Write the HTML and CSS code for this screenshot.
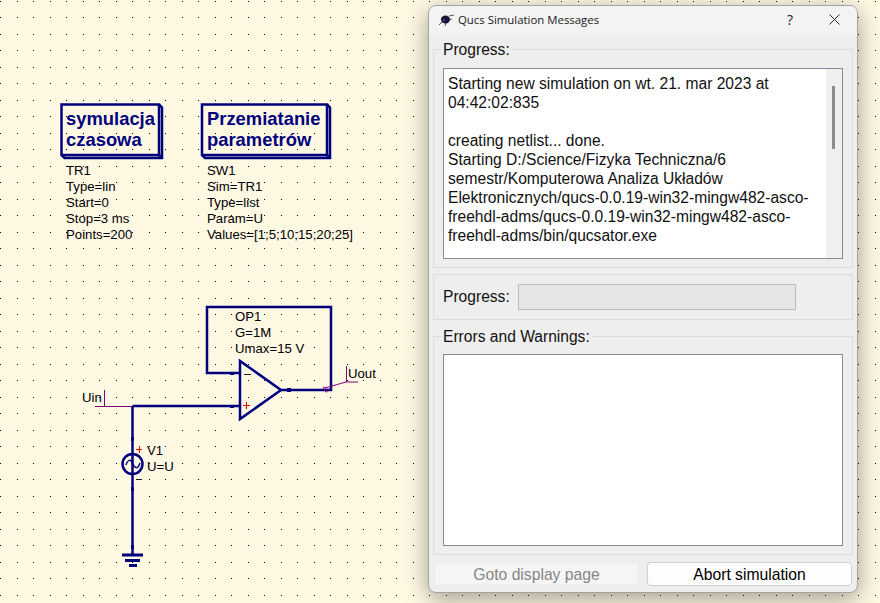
FILE: index.html
```html
<!DOCTYPE html>
<html lang="en">
<head>
    <meta charset="UTF-8">
    <title>Qucs Simulation Messages</title>
    <link rel="stylesheet" href="styles.css">
</head>
<body>

<div class="desktop">
    <!-- Schematic canvas -->
    <svg class="schematic" width="880" height="603" viewBox="0 0 880 603">
        <defs>
            <pattern id="grid" width="33" height="33" patternUnits="userSpaceOnUse">
                <rect x="0" y="1" width="1" height="1"/>
                <rect x="17" y="1" width="1" height="1"/>
                <rect x="0" y="17" width="1" height="1"/>
                <rect x="17" y="17" width="1" height="1"/>
            </pattern>
        </defs>
        <rect width="880" height="603" fill="url(#grid)"/>

        <!-- simulation boxes -->
        <path class="box" d="M61.500 104.500H159V155H61.500Z M159 104.500L162 107.500V158H64.500L61.500 155 M159 155L162 158"/>
        <text class="box-title" x="66" y="125">symulacja</text>
        <text class="box-title" x="66" y="146">czasowa</text>
        <text class="prop" x="66" y="175">TR1</text>
        <text class="prop" x="66" y="191">Type=lin</text>
        <text class="prop" x="66" y="207">Start=0</text>
        <text class="prop" x="66" y="223">Stop=3 ms</text>
        <text class="prop" x="66" y="239">Points=200</text>

        <path class="box" d="M202 104.500H327V155H202Z M327 104.500L330 107.500V158H205L202 155 M327 155L330 158"/>
        <text class="box-title" x="207" y="125">Przemiatanie</text>
        <text class="box-title" x="207" y="146">parametrów</text>
        <text class="prop" x="207" y="175">SW1</text>
        <text class="prop" x="207" y="191">Sim=TR1</text>
        <text class="prop" x="207" y="207">Type=list</text>
        <text class="prop" x="207" y="223">Param=U</text>
        <text class="prop" x="207" y="239">Values=[1;5;10;15;20;25]</text>

        <!-- op amp -->
        <path class="wire" d="M240 373H207V307H331V390H281 M132.500 406H240 M132.500 406V555"/>
        <path class="wire" d="M240 361V419L281 390Z"/>
        <rect class="node" x="230" y="372" width="4" height="3"/>
        <rect class="node" x="230" y="405" width="4" height="3"/>
        <rect class="node" x="287" y="388" width="4" height="4"/>
        <path class="sign-dark" d="M244 374.500H251"/>
        <path class="sign-red" d="M243 405.500H250 M246.500 402V409"/>
        <text class="prop" x="235" y="321">OP1</text>
        <text class="prop" x="235" y="337">G=1M</text>
        <text class="prop" x="235" y="353">Umax=15 V</text>

        <!-- labels -->
        <path class="label-line" d="M95 406.500H132 M104.500 390V406"/>
        <text class="prop" x="82" y="402">Uin</text>
        <path class="label-line" d="M346.500 366V382 M358 382H346L325 388 M325 388C322 385 324 391 326 392C328 393 327 389 325 388"/>
        <text class="prop" x="348" y="378">Uout</text>

        <!-- voltage source -->
        <circle class="source" cx="132.500" cy="464" r="10"/>
        <path class="sine" d="M126 465C128 459 131 459 133 464C135 469 138 469 140 463"/>
        <rect class="node" x="131" y="437" width="3" height="4"/>
        <rect class="node" x="131" y="487" width="3" height="4"/>
        <rect class="node" x="131" y="545" width="3" height="4"/>
        <path class="sign-red" d="M136 449.500H142 M139.500 446V453"/>
        <path class="sign-dark" d="M136 479.500H142"/>
        <text class="prop" x="147" y="455">V1</text>
        <text class="prop" x="147" y="471">U=U</text>

        <!-- ground -->
        <path class="ground" d="M122 555H143 M125 560.500H140 M129 565.500H137"/>
    </svg>

    <!-- Messages dialog -->
    <div class="dialog">
        <div class="titlebar">
            <svg class="bug" width="16" height="14" viewBox="0 0 16 14">
                <path class="bug-legs" d="M1 12L5 8 M3 5L6 6 M7 13L8 10 M11 3L16 2 M10 7L14 6"/>
                <ellipse class="bug-body" cx="7.500" cy="6.500" rx="4.500" ry="4"/>
                <circle class="bug-eye" cx="6" cy="7" r="1.200"/>
            </svg>
            <span class="title">Qucs Simulation Messages</span>
            <span class="help">?</span>
            <svg class="close" width="11" height="11" viewBox="0 0 11 11">
                <path d="M0.500 0.500L10.500 10.500 M10.500 0.500L0.500 10.500"/>
            </svg>
        </div>

        <div class="content">
            <fieldset class="group group-log">
                <legend>Progress:</legend>
                <div class="textview log">
                    <div class="log-text">Starting new simulation on wt. 21. mar 2023 at
04:42:02:835

creating netlist... done.
Starting D:/Science/Fizyka Techniczna/6
semestr/Komputerowa Analiza Układów
Elektronicznych/qucs-0.0.19-win32-mingw482-asco-
freehdl-adms/qucs-0.0.19-win32-mingw482-asco-
freehdl-adms/bin/qucsator.exe</div>
                    <div class="scrollbar"><div class="thumb"></div></div>
                </div>
            </fieldset>

            <div class="group progress-row">
                <span>Progress:</span>
                <div class="progress-bar"></div>
            </div>

            <fieldset class="group group-errors">
                <legend>Errors and Warnings:</legend>
                <div class="textview errors"></div>
            </fieldset>

            <div class="buttons">
                <button disabled>Goto display page</button>
                <button>Abort simulation</button>
            </div>
        </div>
    </div>
</div>

</body>
</html>
```

FILE: styles.css
```css
* {
    box-sizing: border-box;
}
body {
    margin: 0;
    font-family: "Liberation Sans", Arial, sans-serif;
    overflow: hidden;
}
.desktop {
    position: relative;
    width: 880px;
    height: 603px;
    background-color: #fff9e4;
    overflow: hidden;
}
.schematic {
    position: absolute;
    top: 0;
    left: 0;
}

/* schematic parts */
.wire,
.box {
    fill: none;
    stroke: #00007f;
    stroke-width: 2.500;
}
.node {
    fill: #00007f;
}
.source {
    fill: none;
    stroke: #00007f;
    stroke-width: 2.500;
}
.sine {
    fill: none;
    stroke: #00007f;
    stroke-width: 1.500;
}
.ground {
    fill: none;
    stroke: #00007f;
    stroke-width: 3;
}
.label-line {
    fill: none;
    stroke: #800080;
    stroke-width: 1;
}
.sign-red {
    fill: none;
    stroke: #e00000;
    stroke-width: 1;
}
.sign-dark {
    fill: none;
    stroke: #202020;
    stroke-width: 1;
}
.box-title {
    font-size: 18.400px;
    font-weight: bold;
    fill: #00007f;
}
.prop {
    font-size: 13.200px;
    fill: #000;
}

/* dialog */
.dialog {
    position: absolute;
    top: 5px;
    left: 428px;
    width: 430px;
    height: 588px;
    display: flex;
    flex-direction: column;
    background-color: #eeeeee;
    border: 1px solid #a3a3a0;
    border-radius: 8px;
    box-shadow: 0 6px 24px rgba(0,0,0,0.38);
    overflow: hidden;
}
.titlebar {
    flex: none;
    height: 29px;
    display: flex;
    align-items: center;
    padding-left: 9px;
    padding-bottom: 2px;
    background-color: #f3f3f3;
    color: #1a1a1a;
}
.title {
    font-family: "Open Sans", sans-serif;
    font-size: 11.400px;
    margin-left: 4px;
    flex: 1;
}
.help {
    font-family: "Open Sans", sans-serif;
    font-size: 14px;
    margin-right: 36px;
}
.close {
    margin-right: 17px;
}
.close path {
    stroke: #2a2a2a;
    stroke-width: 1;
    fill: none;
}
.bug-body {
    fill: #1a1430;
}
.bug-eye {
    fill: #50409a;
}
.bug-legs {
    stroke: #555;
    stroke-width: 1;
    fill: none;
}
.content {
    flex: 1;
    display: flex;
    flex-direction: column;
    padding: 5px 4px 6px 4px;
    font-size: 15.600px;
    color: #111;
}
.group {
    margin: 0;
    min-width: 0;
    border: 1px solid #dcdcdc;
}
fieldset.group {
    padding: 0 9px 8px 9px;
}
legend {
    margin-left: -2px;
    padding: 0 2px;
    line-height: 19px;
}
.group-log {
    height: 228px;
}
.textview {
    background-color: #fff;
    border: 1px solid #878b96;
}
.log {
    height: 191px;
    margin-top: 9px;
    display: flex;
    overflow: hidden;
}
.log-text {
    flex: 1;
    padding: 5px 4px;
    white-space: pre;
    line-height: 19px;
    overflow: hidden;
}
.scrollbar {
    width: 16px;
    background-color: #f0f0f0;
    padding: 17px 6px 0 6px;
}
.thumb {
    height: 63px;
    width: 3px;
    background-color: #8c8c8c;
}
.progress-row {
    height: 46px;
    margin-top: 6px;
    display: flex;
    align-items: center;
    gap: 8px;
    padding-left: 9px;
}
.progress-bar {
    width: 278px;
    height: 26px;
    background-color: #e6e6e6;
    border: 1px solid #bcbcbc;
}
.group-errors {
    height: 228px;
    margin-top: 7px;
}
.errors {
    height: 192px;
    margin-top: 8px;
}
.buttons {
    display: flex;
    gap: 8px;
    margin-top: 7px;
    padding-left: 1px;
    padding-right: 1px;
}
button {
    flex: 1;
    height: 24px;
    padding: 1px 0 0 0;
    font-family: inherit;
    font-size: 15.700px;
    color: #000;
    background-color: #fdfdfd;
    border: 1px solid #d0d0d0;
    border-radius: 4px;
}
button:disabled {
    color: #858585;
    background-color: #f5f5f5;
    border-color: #ececec;
}
```
